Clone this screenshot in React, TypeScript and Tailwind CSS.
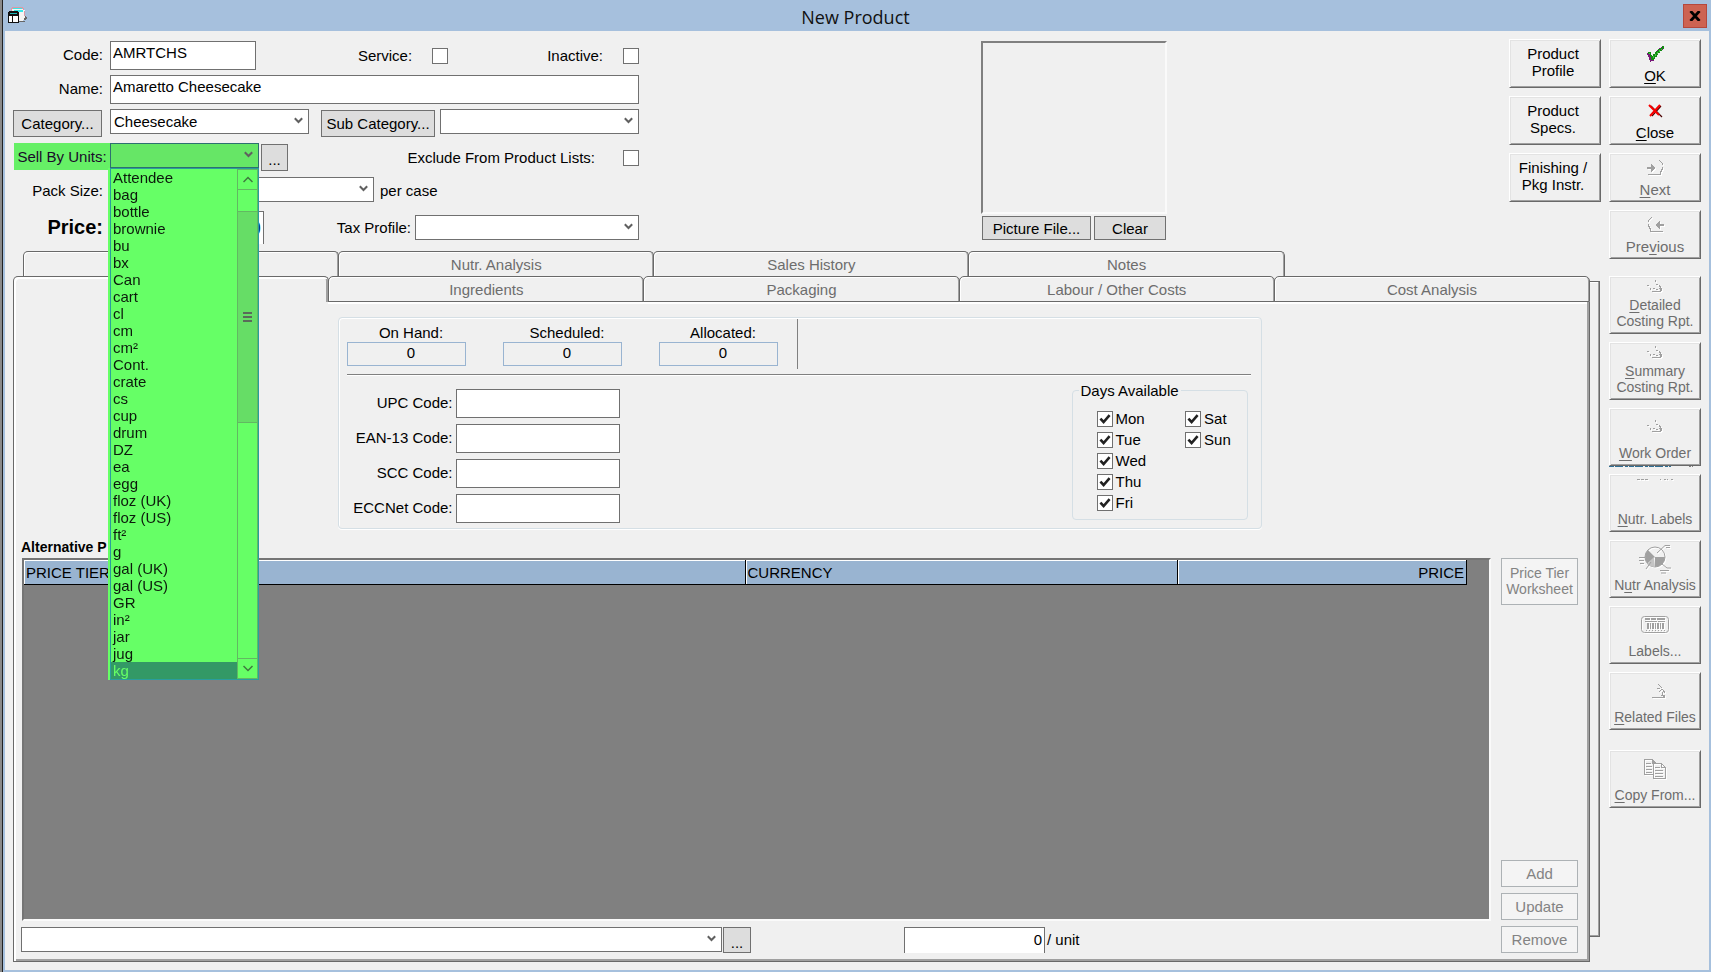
import React, { useState } from 'react';

const UNITS = [
    'Attendee', 'bag', 'bottle', 'brownie', 'bu', 'bx', 'Can', 'cart', 'cl', 'cm',
    'cm²', 'Cont.', 'crate', 'cs', 'cup', 'drum', 'DZ', 'ea', 'egg', 'floz (UK)',
    'floz (US)', 'ft²', 'g', 'gal (UK)', 'gal (US)', 'GR', 'in²', 'jar', 'jug', 'kg',
];

const BACK_TABS = ['', 'Nutr. Analysis', 'Sales History', 'Notes'];
const FRONT_TABS = ['', 'Ingredients', 'Packaging', 'Labour / Other Costs', 'Cost Analysis'];
const STOCK = ['On Hand:', 'Scheduled:', 'Allocated:'];
const CODES = ['UPC Code:', 'EAN-13 Code:', 'SCC Code:', 'ECCNet Code:'];
const DAY_COLUMNS = [['Mon', 'Tue', 'Wed', 'Thu', 'Fri'], ['Sat', 'Sun']];

const Chevron: React.FC = () => (
    <svg className="pointer-events-none absolute right-[6px] top-[8px]" width="9" height="7" viewBox="0 0 9 7">
        <path d="M0.8 1.2 L4.5 5 L8.2 1.2" fill="none" stroke="#606060" strokeWidth="2" />
    </svg>
);

interface ComboProps {
    label: string;
    value?: string;
    className?: string;
    id?: string;
    tone?: string;
    children?: React.ReactNode;
}

const Combo: React.FC<ComboProps> = ({ label, value = '', className = '', id, tone = 'border-[#707070] bg-white', children }) => (
    <div className={`relative h-[25px] self-start ${className}`}>
        <select
            id={id}
            aria-label={label}
            defaultValue={value}
            className={`block h-full w-full appearance-none border pl-[3px] pr-5 outline-none ${tone}`}
        >
            <option value={value}>{value}</option>
        </select>
        <Chevron />
        {children}
    </div>
);

const CheckBox: React.FC<{ id: string; checked?: boolean }> = ({ id, checked = false }) => (
    <span className="relative block h-4 w-4 shrink-0">
        <input
            id={id}
            type="checkbox"
            defaultChecked={checked}
            className="peer block h-4 w-4 appearance-none border border-[#707070] bg-white"
        />
        <svg className="pointer-events-none absolute left-0 top-0 hidden peer-checked:block" width="16" height="16" viewBox="0 0 16 16">
            <path d="M3.4 7.6 L6.6 11 L12.6 4.2" fill="none" stroke="#212121" strokeWidth="2.6" />
        </svg>
    </span>
);

const GreyButton: React.FC<{ className: string; children: React.ReactNode }> = ({ className, children }) => (
    <button type="button" className={`shrink-0 border border-[#707070] bg-[#dddddd] ${className}`}>
        {children}
    </button>
);

const FlatButton: React.FC<{ className: string; children: React.ReactNode }> = ({ className, children }) => (
    <button type="button" disabled className={`border border-[#adb2b5] bg-[#f4f4f4] text-[#838383] ${className}`}>
        {children}
    </button>
);

const RAISED =
    'w-[92px] shrink-0 border border-t-white border-l-white border-r-[#696969] border-b-[#696969] shadow-[inset_1px_1px_0_#e3e3e3,inset_-1px_-1px_0_#a0a0a0]';

interface ToolButtonProps {
    icon: React.ReactNode;
    lines: string[];
    // index of the underlined letter in the first line, -1 for none
    hot?: number;
    small?: boolean;
    disabled?: boolean;
    className?: string;
}

const ToolButton: React.FC<ToolButtonProps> = ({ icon, lines, hot = 0, small = false, disabled = true, className = '' }) => {
    const [first, ...rest] = lines;
    return (
        <button
            type="button"
            disabled={disabled}
            className={`relative flex flex-col items-center ${RAISED} ${
                small ? 'h-[49px] pb-[3px] text-[15px] leading-[17px]' : 'h-[58px] pb-1 text-[14px] leading-[16px]'
            } ${disabled ? 'text-[#6d6d6d]' : 'text-black'} ${className}`}
        >
            <span className={`flex flex-1 items-center ${disabled ? 'drop-shadow-[1px_1px_0_#fff]' : ''}`}>{icon}</span>
            <span className="whitespace-nowrap">
                {hot < 0 ? first : (
                    <>
                        {first.slice(0, hot)}
                        <span className="underline underline-offset-2">{first[hot]}</span>
                        {first.slice(hot + 1)}
                    </>
                )}
            </span>
            {rest.map((line) => (
                <span key={line} className="whitespace-nowrap">{line}</span>
            ))}
        </button>
    );
};

const FormIcon: React.FC = () => (
    <svg width="20" height="18" viewBox="0 0 20 18" shapeRendering="crispEdges">
        <path d="M4 1h12v2h1v10h-2v1h-5l-5 1z" fill="#f4f4f4" />
        <path d="M3 1h1V0h11v1h1v2h-1V2H4v2H3zM16 4h1v5h-1z" fill="#d99aa8" />
        <path d="M5 1h9v1H5zM6 3h9v2H6z" fill="#35e8e8" />
        <path d="M17 9h1v1h1v2h-1v1h-2v-2h1zM11 14h6v1h-6z" fill="#666" />
        <path d="M0 5h1V4h9v1h1v11H0z" fill="#111" />
        <path d="M1 9h3v6H1zM5 9h5v6H5z" fill="#fff" />
        <path d="M2 6h7v1H2z" fill="#1fb5b5" />
        <path d="M4 7h1v9H4z" fill="#111" />
    </svg>
);

const OkIcon: React.FC = () => (
    <svg width="17" height="16" viewBox="0 0 17 16" shapeRendering="crispEdges">
        <path d="M0 7h3v1h1v2h2v-2h2v-2h2v-2h2v-2h2v-1h2v3h-1v1h-2v2h-2v2h-1v2h-2v2h-1v2H4v1H3v-2H2v-3H1v-2H0z" fill="#7a1a7a" />
        <path d="M1 6h3v3h1v1h1v-2h2v-2h1v-1h2v-2h2v-1h2v-2h2v3h-2v2h-2v2h-2v2h-1v2h-2v2h-1v1H4v-3H3v-3H1z" fill="#128a12" />
        <path d="M2 7h1v2h1v2h1v1h1v-2h2v-2h2v-2h2v-2h2v-1h1v1h-2v2h-2v2h-2v2h-2v2H5v-1H4v-2H3v-1H2z" fill="#3fc43f" />
    </svg>
);

const CloseIcon: React.FC = () => (
    <svg width="15" height="14" viewBox="0 0 15 14">
        <path d="M3 2l11 11M13 2L4 12" stroke="#4a0000" strokeWidth="1.2" fill="none" />
        <path d="M1 1l10 10M12 1L2 12" stroke="#f80000" strokeWidth="2" fill="none" />
    </svg>
);

const ArrowPage: React.FC<{ flip?: boolean }> = ({ flip = false }) => (
    <svg className={flip ? '-scale-x-100' : ''} width="17" height="16" viewBox="0 0 17 16" shapeRendering="crispEdges">
        <path d="M0 7h4V4h1v1h1v1h1v1h1v2H7v1H6v1H5v1H4V9H0z" fill="#a0a0a0" />
        <path d="M12 0h1v1h1v1h1v1h1v2h-1V3h-1V2h-1V1h-1zM15 7h1v3h-1v2h-1v3H1v-1h12v-3h1v-2h1z" fill="#a0a0a0" />
    </svg>
);

const ReportIcon: React.FC = () => (
    <svg width="16" height="14" viewBox="0 0 16 14" shapeRendering="crispEdges">
        <path d="M8 0h1v2H8zM0 5h2v1H0zM9 4h2v1H9zM12 5h1v1h1v2h1v3h-1v1H5v-1h8V9h-1V8h1V7h-1zM3 8h1v2H3zM6 8h2v1H6zM9 9h2v1H9z" fill="#a0a0a0" />
    </svg>
);

const DashIcon: React.FC = () => (
    <svg width="36" height="30" viewBox="0 0 36 30" shapeRendering="crispEdges">
        <path d="M0 1h3v1H0zM4 1h3v1H4zM8 1h3v1H8zM23 1h1v1h-1zM27 1h2v1h-2zM30 1h1v1h-1zM34 1h2v1h-2z" fill="#a0a0a0" />
    </svg>
);

const PieIcon: React.FC = () => (
    <svg width="33" height="30" viewBox="0 0 33 30">
        <circle cx="16" cy="13" r="10" fill="none" stroke="#a0a0a0" strokeWidth="1" />
        <path d="M16 13L9 5.900A10 10 0 0 0 8.400 19.500zM16 13H26A10 10 0 0 1 16 23z" fill="#a0a0a0" />
        <path d="M15 13L8 20A10 10 0 0 0 16 23z" fill="#c4c4c4" />
        <path d="M18 9L26 1.500h5M27 3.500h4M0 13.500h6M0 16.500h5M1 19.500h4M12 18l-5 7M23 20l5 4h4M27 26.500h3M21 26.500h6M22 29h5" fill="none" stroke="#a0a0a0" />
    </svg>
);

const BarcodeIcon: React.FC = () => (
    <svg width="29" height="18" viewBox="0 0 29 18">
        <rect x="0.5" y="0.5" width="27" height="16" rx="3" fill="none" stroke="#a0a0a0" />
        <g fill="#a0a0a0" shapeRendering="crispEdges">
            <path d="M4 2h5v2H4zM10 2h5v2h-5zM16 2h8v2h-8zM4 5h12v1H4zM17 5h7v1h-7z" />
            <path d="M6 7h2v6H6zM9 7h1v6H9zM11 7h2v6h-2zM14 7h1v6h-1zM16 7h2v6h-2zM19 7h1v6h-1zM21 7h2v6h-2z" />
            <path d="M5 14h1v1H5zM8 14h1v1H8zM11 14h1v1h-1zM14 14h1v1h-1zM17 14h1v1h-1zM20 14h1v1h-1zM23 14h1v1h-1z" />
        </g>
    </svg>
);

const RelatedIcon: React.FC = () => (
    <svg className="ml-2" width="14" height="15" viewBox="0 0 14 15" shapeRendering="crispEdges">
        <path d="M6 0h1v1H6zM7 1h1v1h1v1h1v1h-1V3H8V2H7zM5 4h3v1H5zM9 5h2v1H9zM11 6h1v1h1v2h-1V8h-1zM8 6h1v1H8zM7 7h1v1H7zM10 8h1v3h2v3H0v-1h11v-1H9v-1h1z" fill="#a0a0a0" />
    </svg>
);

const CopyIcon: React.FC = () => (
    <svg width="23" height="21" viewBox="0 0 23 21" shapeRendering="crispEdges">
        <path d="M0 0h9v1h1v1h1v1h1v1h-1v1H8V1H1v14h8v1H0zM2 4h5v1H2zM2 7h6v1H2zM2 10h6v1H2zM2 13h6v1H2z" fill="#a0a0a0" />
        <path d="M9 4h9v1h1v1h1v1h1v1h1v12H9zM10 5v14h11V9h-4V5zM18 6v2h2V7h-1V6z" fillRule="evenodd" fill="#a0a0a0" />
        <path d="M11 8h5v1h-5zM11 11h8v1h-8zM11 14h8v1h-8zM11 17h8v1h-8z" fill="#a0a0a0" />
    </svg>
);

const UnitList: React.FC = () => {
    const [selected, setSelected] = useState('kg');

    return (
        <div className="absolute left-0 top-full z-20 flex w-full border border-[#2a9d9d] bg-[#66ff66]">
            <span className="absolute -top-px -bottom-px -left-[3px] w-[2px] bg-[#66ff66] mix-blend-multiply" />
            <ul role="listbox" aria-label="Units" className="flex-1">
                {UNITS.map((unit) => (
                    <li
                        key={unit}
                        role="option"
                        aria-selected={unit === selected}
                        onClick={() => setSelected(unit)}
                        className={`pl-[2px] leading-[17px] ${unit === selected ? 'bg-[#339966] text-[#66ff66]' : 'text-[#0c1a0c]'}`}
                    >
                        {unit}
                    </li>
                ))}
            </ul>
            <div className="flex w-[21px] flex-col border-x border-[#62b862]">
                <button type="button" aria-label="Scroll up" className="flex h-[21px] items-center justify-center border-y border-[#62b862]">
                    <svg width="10" height="7" viewBox="0 0 10 7">
                        <path d="M0.500 6L5 1.500L9.500 6" fill="none" stroke="#3f7a3f" strokeWidth="1.500" />
                    </svg>
                </button>
                <div className="h-[21px]" />
                <div className="flex h-[212px] flex-col items-center justify-center gap-[2px] border-y border-[#62b862] bg-[#66dd66]">
                    <span className="h-[2px] w-[9px] bg-[#5a6a5a]" />
                    <span className="h-[2px] w-[9px] bg-[#5a6a5a]" />
                    <span className="h-[2px] w-[9px] bg-[#5a6a5a]" />
                </div>
                <div className="flex-1" />
                <button type="button" aria-label="Scroll down" className="flex h-[21px] items-center justify-center border-y border-[#62b862]">
                    <svg width="10" height="7" viewBox="0 0 10 7">
                        <path d="M0.500 1L5 5.500L9.500 1" fill="none" stroke="#3f7a3f" strokeWidth="1.500" />
                    </svg>
                </button>
            </div>
        </div>
    );
};

const TAB =
    'flex-1 rounded-t-[5px] border border-[#696969] text-[#6d6d6d] -ml-px first:ml-0';

const FIELD_LABEL = 'w-[97px] shrink-0 pr-[7px] text-right';
const TEXT_BOX = 'h-[29px] border border-[#707070] bg-white pl-[2px] pb-[6px] outline-none';

const ProductForm: React.FC = () => (
    <form className="flex w-[626px] shrink-0 flex-col gap-[5px] pt-[2px] pb-[7px]">
        <div className="flex h-[29px] items-center">
            <label htmlFor="code" className={`pb-[2px] ${FIELD_LABEL}`}>Code:</label>
            <input id="code" type="text" defaultValue="AMRTCHS" className={`w-[146px] ${TEXT_BOX}`} />
            <div className="ml-auto flex items-center gap-[99px]">
                <div className="flex items-center gap-5">
                    <label htmlFor="service">Service:</label>
                    <CheckBox id="service" />
                </div>
                <div className="flex items-center gap-5">
                    <label htmlFor="inactive">Inactive:</label>
                    <CheckBox id="inactive" />
                </div>
            </div>
        </div>

        <div className="flex h-[29px] items-center">
            <label htmlFor="name" className={`pb-[2px] ${FIELD_LABEL}`}>Name:</label>
            <input id="name" type="text" defaultValue="Amaretto Cheesecake" className={`min-w-0 flex-1 ${TEXT_BOX}`} />
        </div>

        <div className="flex h-[29px] items-center">
            <GreyButton className="mr-2 h-[27px] w-[89px]">Category...</GreyButton>
            <Combo label="Category" value="Cheesecake" className="w-[199px]" />
            <GreyButton className="ml-3 mr-[5px] h-[27px] w-[114px]">Sub Category...</GreyButton>
            <Combo label="Sub Category" className="flex-1" />
        </div>

        <div className="flex h-[29px] items-center">
            <label htmlFor="sell-units" className="ml-px w-[96px] shrink-0 self-start whitespace-nowrap bg-[#66f066] text-center leading-[27px] text-[#1a0a2a]">
                Sell By Units:
            </label>
            <Combo id="sell-units" label="Sell By Units" tone="border-[#2d7070] bg-[#66e666]" className="w-[149px]">
                <UnitList />
            </Combo>
            <GreyButton className="ml-[2px] h-[27px] w-[27px] pt-1">...</GreyButton>
            <div className="ml-auto flex items-center gap-7">
                <label htmlFor="exclude">Exclude From Product Lists:</label>
                <CheckBox id="exclude" />
            </div>
        </div>

        <div className="flex h-[29px] items-center">
            <label htmlFor="pack" className={`pb-[2px] ${FIELD_LABEL}`}>Pack Size:</label>
            <Combo id="pack" label="Pack Size" className="mr-[6px] w-[264px]" />
            <span className="pb-[2px]">per case</span>
        </div>

        <div className="flex h-[33px] items-center">
            <label htmlFor="price" className={`text-[20px] font-bold ${FIELD_LABEL}`}>Price:</label>
            <input
                id="price"
                type="text"
                defaultValue="0.00"
                className="h-[33px] w-[154px] border border-b-0 border-[#707070] bg-white pr-[2px] text-right text-[20px] font-bold text-[#003366] outline-none"
            />
            <div className="ml-auto flex items-center gap-[4px]">
                <label htmlFor="tax">Tax Profile:</label>
                <Combo id="tax" label="Tax Profile" className="w-[224px]" />
            </div>
        </div>
    </form>
);

const StockPanel: React.FC = () => (
    <section className="mx-auto w-[924px] rounded-[4px] border border-[#d5dfe5] pt-px pb-[5px] shadow-[inset_1px_1px_0_#fff,0_1px_0_#fff]">
        <div className="flex h-[50px] pl-2">
            {STOCK.map((name) => (
                <div key={name} className="mr-[37px] w-[119px] pt-[5px] text-center">
                    <div className="pl-[10px] leading-[17px]">{name}</div>
                    <div className="mt-px h-[24px] border border-[#99b4d1] pl-[10px] leading-[19px]">0</div>
                </div>
            ))}
            <div className="-ml-[18px] w-px bg-[#808080]" />
        </div>
        <div className="ml-2 mr-[10px] mt-[5px] h-[2px] border-b border-b-white bg-[#808080]" />

        <div className="flex items-start justify-between">
            <div className="flex flex-col gap-[6px] pt-[13px]">
                {CODES.map((name) => (
                    <div key={name} className="flex items-center gap-[3px]">
                        <label htmlFor={name} className="w-[114px] pb-[2px] text-right">{name}</label>
                        <input id={name} type="text" className={`w-[164px] ${TEXT_BOX}`} />
                    </div>
                ))}
            </div>
            <fieldset className="mr-[13px] mt-[6px] flex w-[176px] gap-[39px] rounded-[4px] border border-[#d5dfe5] pl-6 pt-[9px] pb-[6px]">
                <legend className="-ml-[18px] px-[2px] leading-[17px]">Days Available</legend>
                {DAY_COLUMNS.map((days) => (
                    <div key={days[0]}>
                        {days.map((day) => (
                            <div key={day} className="flex h-[21px] items-center gap-[3px]">
                                <CheckBox id={day} checked />
                                <label htmlFor={day}>{day}</label>
                            </div>
                        ))}
                    </div>
                ))}
            </fieldset>
        </div>
    </section>
);

const PriceTable: React.FC = () => (
    <div className="ml-px flex-1 border-2 border-t-[#757575] border-l-[#757575] border-r-[#fafafa] border-b-[#fafafa] bg-[#808080]">
        <table className="w-[calc(100%-22px)] table-fixed border-separate border-spacing-0">
            <thead>
                <tr className="h-[25px] bg-[#99b4d1] text-left">
                    <th className="w-[50%] border-r border-b border-black pl-[2px] font-normal shadow-[inset_1px_1px_0_#fff]">PRICE TIER</th>
                    <th className="w-[30%] border-r border-b border-black pl-[2px] font-normal shadow-[inset_1px_1px_0_#fff]">CURRENCY</th>
                    <th className="w-[20%] border-r border-b border-black pr-[2px] text-right font-normal shadow-[inset_1px_1px_0_#fff]">PRICE</th>
                </tr>
            </thead>
        </table>
    </div>
);

const App: React.FC = () => {
    return (
        <div className="flex min-h-screen border-l-2 border-[#8a8a8a] font-['Liberation_Sans',Arial,sans-serif] text-[15px] leading-[17px] text-black">
            <div className="flex flex-1 flex-col border-l border-[#222] bg-[#a6c0dd]">
                <header className="flex h-[31px] items-center justify-between pl-[5px] pr-1">
                    <FormIcon />
                    <h1 className="pt-[2px] font-['Open_Sans','Noto_Sans',sans-serif] text-[18px] leading-[24px] text-[#111]">New Product</h1>
                    <button type="button" aria-label="Close window" className="flex h-6 w-6 items-center justify-center border border-[#b5483c] bg-[#cd6352]">
                        <svg width="12" height="10" viewBox="0 0 12 10">
                            <path d="M1.500 0L10.500 10M10.500 0L1.500 10" stroke="#000" strokeWidth="2.800" />
                        </svg>
                    </button>
                </header>

                <div className="mx-[2px] mb-[2px] flex flex-1 gap-2 bg-[#f0f0f0] p-2">
                    <main className="flex min-w-0 flex-1 flex-col">
                        <div className="flex justify-between">
                            <ProductForm />

                            <div className="w-[186px] pt-[2px]">
                                <div className="h-[173px] border-2 border-t-[#808080] border-l-[#808080] border-r-[#fafafa] border-b-[#fafafa]" />
                                <div className="flex gap-[3px] px-px pt-[2px]">
                                    <GreyButton className="h-6 w-[109px]">Picture File...</GreyButton>
                                    <GreyButton className="h-6 flex-1">Clear</GreyButton>
                                </div>
                            </div>

                            <div className="flex flex-col gap-2">
                                <button type="button" className={`h-[49px] pr-1 pb-[3px] ${RAISED}`}>Product<br />Profile</button>
                                <button type="button" className={`h-[49px] pr-1 pb-[3px] ${RAISED}`}>Product<br />Specs.</button>
                                <button type="button" className={`h-[49px] pr-1 pb-[3px] ${RAISED}`}>Finishing /<br />Pkg Instr.</button>
                            </div>
                        </div>

                        <div className="flex flex-1 pr-px">
                            <div className="flex min-w-0 flex-1 flex-col">
                                <div role="tablist" className="ml-[10px] flex h-[25px] w-4/5">
                                    {BACK_TABS.map((tab) => (
                                        <button key={tab} type="button" role="tab" className={`border-b-0 shadow-[inset_1px_1px_0_#fff,inset_-1px_0_0_#a0a0a0] ${TAB}`}>
                                            {tab}
                                        </button>
                                    ))}
                                </div>
                                <div role="tablist" className="flex h-[26px]">
                                    {FRONT_TABS.map((tab, i) => (
                                        <button
                                            key={tab}
                                            type="button"
                                            role="tab"
                                            aria-selected={i === 0}
                                            className={`${TAB} ${
                                                i === 0
                                                    ? 'border-b-0 shadow-[inset_2px_2px_0_#fff,inset_-2px_0_0_#a0a0a0]'
                                                    : 'shadow-[inset_1px_1px_0_#fff,inset_-1px_0_0_#a0a0a0,0_2px_0_#fff]'
                                            }`}
                                        >
                                            {tab}
                                        </button>
                                    ))}
                                </div>

                                <div className="flex flex-1 flex-col border-x border-b border-[#696969] pb-2 pl-[7px] pr-[11px] pt-[15px] shadow-[inset_2px_0_0_#fff,inset_-2px_-2px_0_#a0a0a0]">
                                    <StockPanel />
                                    <h2 className="mt-[10px] text-[14px] font-bold">Alternative P</h2>
                                    <div className="mt-[2px] flex flex-1 gap-[10px]">
                                        <div className="flex flex-1 flex-col">
                                            <PriceTable />
                                            <div className="mt-[6px] flex h-[26px]">
                                                <Combo label="Price tier" className="w-[701px]" />
                                                <GreyButton className="ml-px h-[26px] w-[28px] pt-1">...</GreyButton>
                                                <input
                                                    type="text"
                                                    aria-label="Price per unit"
                                                    defaultValue="0"
                                                    className="ml-[153px] w-[141px] border border-b-0 border-[#707070] bg-white pr-[2px] pb-[2px] text-right outline-none"
                                                />
                                                <span className="pl-[2px] leading-[25px]">/ unit</span>
                                            </div>
                                        </div>
                                        <div className="flex w-[77px] flex-col gap-[6px]">
                                            <FlatButton className="mb-auto h-[47px] pb-[2px] text-[14px] leading-[16px]">Price Tier Worksheet</FlatButton>
                                            <FlatButton className="h-[27px]">Add</FlatButton>
                                            <FlatButton className="h-[27px]">Update</FlatButton>
                                            <FlatButton className="h-[27px]">Remove</FlatButton>
                                        </div>
                                    </div>
                                </div>
                            </div>

                            {/* edge of the tab page that sits behind the active one */}
                            <div className="mt-[30px] mb-[25px] w-[10px] border-y border-r border-[#696969] shadow-[inset_-1px_-1px_0_#a0a0a0,inset_0_1px_0_#fff]" />
                        </div>
                    </main>

                    <aside className="flex flex-col gap-2">
                        <ToolButton small disabled={false} icon={<OkIcon />} lines={['OK']} />
                        <ToolButton small disabled={false} icon={<CloseIcon />} lines={['Close']} />
                        <ToolButton small icon={<ArrowPage />} lines={['Next']} />
                        <ToolButton small icon={<ArrowPage flip />} lines={['Previous']} hot={3} className="mb-[9px]" />
                        <ToolButton icon={<ReportIcon />} lines={['Detailed', 'Costing Rpt.']} />
                        <ToolButton icon={<ReportIcon />} lines={['Summary', 'Costing Rpt.']} />
                        <div className="relative">
                            <ToolButton icon={<ReportIcon />} lines={['Work Order']} />
                            <svg className="absolute left-0 top-full" width="92" height="1" shapeRendering="crispEdges">
                                <path d="M0 0.500h62" stroke="#2f6f94" strokeDasharray="5 1 8 2 3 1" />
                                <path d="M80 0.500h4" stroke="#808080" strokeDasharray="2 1" />
                            </svg>
                        </div>
                        <ToolButton icon={<DashIcon />} lines={['Nutr. Labels']} />
                        <ToolButton icon={<PieIcon />} lines={['Nutr Analysis']} hot={1} />
                        <ToolButton icon={<BarcodeIcon />} lines={['Labels...']} hot={-1} />
                        <ToolButton icon={<RelatedIcon />} lines={['Related Files']} />
                        <ToolButton icon={<CopyIcon />} lines={['Copy From...']} className="mt-3" />
                    </aside>
                </div>
            </div>
        </div>
    );
};

export default App;
